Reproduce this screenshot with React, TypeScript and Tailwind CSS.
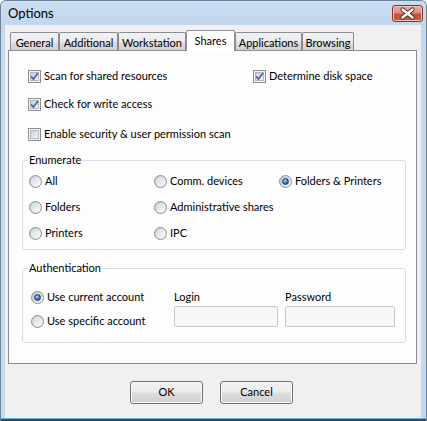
import React from "react";

function CheckBox({ checked }: { checked?: boolean }) {
  return (
    <span className="relative flex h-[13px] w-[13px] shrink-0 items-center justify-center border border-[#8e8f8f] bg-[#f4f4f4]">
      <span className="h-[9px] w-[9px] border border-[#b4b8be] bg-[linear-gradient(135deg,#c9cdd3,#f6f6f6)]" />
      {checked && (
        <svg className="absolute left-0 top-0" width="11" height="11" viewBox="0 0 11 11">
          <path d="M2 5.3 L4.4 8 L9 2" fill="none" stroke="#5268ad" strokeWidth="1.8" />
        </svg>
      )}
    </span>
  );
}

function Radio({ checked }: { checked?: boolean }) {
  return (
    <span className="flex h-[13px] w-[13px] shrink-0 items-center justify-center rounded-full border border-[#8e8f8f] bg-[linear-gradient(135deg,#c4c8ce,#f7f7f7)]">
      {checked ? (
        <span className="h-[7px] w-[7px] rounded-full border border-[#1b3d6e] bg-[radial-gradient(circle_at_40%_35%,#a6dcff,#2a6bc0_60%,#17457f)]" />
      ) : (
        <span className="h-[9px] w-[9px] rounded-full bg-[linear-gradient(135deg,#d4d7db,#fbfbfb)]" />
      )}
    </span>
  );
}

function CheckRow({ label, checked }: { label: string; checked?: boolean }) {
  return (
    <div className="flex h-[16px] items-center gap-[3px]">
      <CheckBox checked={checked} />
      <span className="whitespace-nowrap">{label}</span>
    </div>
  );
}

function RadioRow({ label, checked }: { label: string; checked?: boolean }) {
  return (
    <div className="flex h-[16px] items-center gap-[3px]">
      <Radio checked={checked} />
      <span className="whitespace-nowrap">{label}</span>
    </div>
  );
}

const tabs = [
  { label: "General", w: "w-[49px]" },
  { label: "Additional", w: "w-[59px]" },
  { label: "Workstation", w: "w-[68px]" },
  { label: "Shares", w: "w-[49px]", active: true },
  { label: "Applications", w: "w-[67px]" },
  { label: "Browsing", w: "w-[52px]" },
];

function Button({ label }: { label: string }) {
  return (
    <div className="flex h-[23px] w-[73px] items-center justify-center rounded-[3px] border border-[#707070] bg-[linear-gradient(#f2f2f2_0%,#ebebeb_48%,#dddddd_52%,#cfcfcf_100%)] shadow-[inset_0_0_0_1px_#fbfbfb]">
      {label}
    </div>
  );
}

export default function App() {
  return (
    <div className="flex h-[421px] w-[427px] flex-col overflow-hidden rounded-t-[6px] border border-b-0 border-[#6e8399] bg-[#c4d8ee] font-['Lato',sans-serif] text-[11px] text-black">
      {/* Title bar */}
      <div className="flex h-[24px] items-start justify-between bg-[linear-gradient(#cbddf1,#c2d6ec)] pl-[7px] pr-[3px]">
        <span className="mt-[4px] text-[13px] leading-[16px]">Options</span>
        <div className="mt-[4px] h-[17px] w-[31px] rounded-[3px] border border-[#7a3a30] bg-[linear-gradient(#eab0a3_0%,#dc8e80_45%,#c3513d_55%,#c75a44_100%)] shadow-[inset_0_0_0_1px_#f1c1b6]">
          <svg width="29" height="15" viewBox="0 0 29 15">
            <path d="M9.5 3.5 L19.5 11.5 M19.5 3.5 L9.5 11.5" stroke="#5a2a22" strokeWidth="4.2" strokeLinecap="round" />
            <path d="M9.5 3.5 L19.5 11.5 M19.5 3.5 L9.5 11.5" stroke="#ffffff" strokeWidth="2.4" strokeLinecap="round" />
          </svg>
        </div>
      </div>

      {/* Client area */}
      <div className="ml-[4px] flex h-[393px] w-[416px] flex-col bg-[#f0f0f0]">
        {/* Tabs */}
        <div className="ml-[5px] mt-[5px] flex h-[21px] items-end">
          {tabs.map((t) =>
            t.active ? (
              <div
                key={t.label}
                className={`relative z-10 flex h-[21px] ${t.w} items-center justify-center rounded-t-[2px] border border-b-0 border-[#898c95] bg-white pb-[2px] leading-none`}
              >
                {t.label}
              </div>
            ) : (
              <div
                key={t.label}
                className={`flex h-[19px] ${t.w} items-center justify-center rounded-t-[2px] border border-b-0 border-[#898c95] bg-[linear-gradient(#f2f2f2_0%,#ebebeb_45%,#dddddd_55%,#cfcfcf_100%)] leading-none`}
              >
                {t.label}
              </div>
            )
          )}
        </div>

        {/* Tab panel */}
        <div className="-mt-px ml-[3px] flex h-[314px] w-[409px] flex-col border border-[#898c95] bg-[#fdfdfd] leading-[16px]">
          <div className="ml-[19px] mt-[17px] grid grid-cols-[225px_1fr]">
            <CheckRow label="Scan for shared resources" checked />
            <CheckRow label="Determine disk space" checked />
          </div>
          <div className="ml-[19px] mt-[12px]">
            <CheckRow label="Check for write access" checked />
          </div>
          <div className="ml-[19px] mt-[14px]">
            <CheckRow label="Enable security & user permission scan" />
          </div>

          <fieldset className="ml-[13px] mr-[10px] mt-[11px] rounded-[3px] border border-[#d5dfe5] pb-[8px] pl-[6px] pt-[6px]">
            <legend className="-ml-[1px] px-[1px] leading-[14px]">Enumerate</legend>
            <div className="grid grid-cols-[125px_125px_1fr] gap-y-[10px]">
              <RadioRow label="All" />
              <RadioRow label="Comm. devices" />
              <RadioRow label="Folders & Printers" checked />
              <RadioRow label="Folders" />
              <RadioRow label="Administrative shares" />
              <div />
              <RadioRow label="Printers" />
              <RadioRow label="IPC" />
            </div>
          </fieldset>

          <fieldset className="ml-[13px] mr-[10px] mt-[11px] rounded-[3px] border border-[#d5dfe5] pb-[13px] pl-[8px] pt-[14px]">
            <legend className="-ml-[3px] px-[1px] leading-[14px]">Authentication</legend>
            <div className="grid grid-cols-[143px_111px_110px]">
              <div className="flex flex-col gap-[8px]">
                <RadioRow label="Use current account" checked />
                <RadioRow label="Use specific account" />
              </div>
              <div className="flex flex-col">
                <div className="h-[16px]">Login</div>
                <div className="mt-[1px] h-[21px] w-[104px] rounded-[2px] border border-[#c5c8ce] bg-[#f8f8f8]" />
              </div>
              <div className="flex flex-col">
                <div className="h-[16px]">Password</div>
                <div className="mt-[1px] h-[21px] w-[110px] rounded-[2px] border border-[#c5c8ce] bg-[#f8f8f8]" />
              </div>
            </div>
          </fieldset>
        </div>

        {/* Buttons */}
        <div className="mt-[17px] flex justify-center gap-[17px] pr-[3px]">
          <Button label="OK" />
          <Button label="Cancel" />
        </div>
      </div>

      {/* Bottom frame */}
      <div className="h-[3px] border-t border-[#63b4e3] bg-[#2d4a6b]" />
    </div>
  );
}
